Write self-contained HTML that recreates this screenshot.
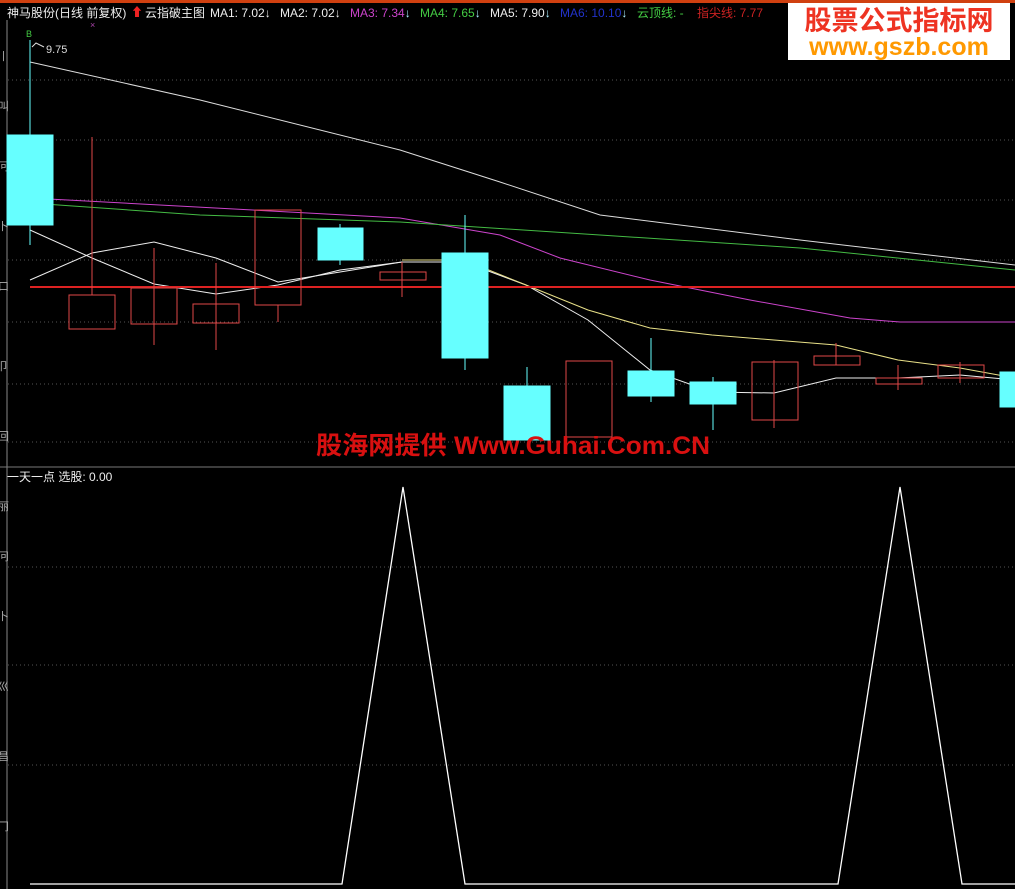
<!DOCTYPE html>
<html><head><meta charset="utf-8"><style>
html,body{margin:0;padding:0;background:#000;width:1015px;height:889px;overflow:hidden}
svg{display:block}
text{font-family:"Liberation Sans","Noto Sans CJK SC",sans-serif}
</style></head><body>
<svg width="1015" height="889" viewBox="0 0 1015 889" xmlns="http://www.w3.org/2000/svg">
<rect width="1015" height="889" fill="#000"/>
<rect x="0" y="0" width="1015" height="3" fill="#d04010"/>
<g stroke="#555" stroke-dasharray="1,3" stroke-width="1">
<line x1="8" y1="80" x2="1015" y2="80"/><line x1="8" y1="140" x2="1015" y2="140"/><line x1="8" y1="200" x2="1015" y2="200"/><line x1="8" y1="260" x2="1015" y2="260"/><line x1="8" y1="322" x2="1015" y2="322"/><line x1="8" y1="384" x2="1015" y2="384"/><line x1="8" y1="442" x2="1015" y2="442"/>
<line x1="8" y1="567" x2="1015" y2="567"/><line x1="8" y1="665" x2="1015" y2="665"/><line x1="8" y1="765" x2="1015" y2="765"/>
</g>
<line x1="7" y1="20" x2="7" y2="889" stroke="#888"/>
<line x1="0" y1="467" x2="1015" y2="467" stroke="#777"/>
<g fill="#aaa" font-size="11">
<text x="-2" y="60">丨</text><text x="-2" y="110">叫</text><text x="-2" y="170">冋</text><text x="-2" y="230">卜</text><text x="-2" y="290">口</text><text x="-2" y="370">卩</text><text x="-2" y="440">回</text>
<text x="-2" y="510">丽</text><text x="-2" y="560">冋</text><text x="-2" y="620">卜</text><text x="-2" y="690">巛</text><text x="-2" y="760">昌</text><text x="-2" y="830">冂</text>
</g>
<polyline fill="none" stroke="#ddd" points="30,62 200,100 400,150 500,182 600,215 800,240 1015,265"/>
<polyline fill="none" stroke="#cc44cc" points="30,198 400,218 500,235 560,258 650,280 750,300 850,318 900,322 1015,322"/>
<polyline fill="none" stroke="#44bb44" points="30,203 200,215 400,222 600,235 800,248 1015,270"/>
<polyline fill="none" stroke="#eee" points="30,230 92,258 154,284 216,294 278,285 340,270 402,262 464,262 526,285 588,320 650,370 712,392 774,393 836,378 898,378 960,375 1015,380"/>
<polyline fill="none" stroke="#eee" points="30,280 92,253 154,242 216,258 278,282 340,272 402,262"/>
<polyline fill="none" stroke="#e8e088" points="402,260 464,260 526,285 588,310 650,328 712,335 774,340 836,345 898,360 960,368 1015,378"/>
<line x1="30" y1="287" x2="1015" y2="287" stroke="#dd2222" stroke-width="2"/>
<g stroke="#e04848" fill="none">
<line x1="92" y1="137" x2="92" y2="295"/><rect x="69" y="295" width="46" height="34"/>
<line x1="154" y1="248" x2="154" y2="345"/><rect x="131" y="288" width="46" height="36"/>
<line x1="216" y1="263" x2="216" y2="350"/><rect x="193" y="304" width="46" height="19"/>
<line x1="278" y1="305" x2="278" y2="322"/><rect x="255" y="210" width="46" height="95"/>
<line x1="402" y1="262" x2="402" y2="297"/><rect x="380" y="272" width="46" height="8"/>
<rect x="566" y="361" width="46" height="76"/>
<line x1="774" y1="360" x2="774" y2="428"/><rect x="752" y="362" width="46" height="58"/>
<line x1="836" y1="343" x2="836" y2="365"/><rect x="814" y="356" width="46" height="9"/>
<line x1="898" y1="365" x2="898" y2="390"/><rect x="876" y="378" width="46" height="6"/>
<line x1="960" y1="362" x2="960" y2="383"/><rect x="938" y="365" width="46" height="13"/>
</g>
<g stroke="#66ffff" fill="#66ffff">
<line x1="30" y1="40" x2="30" y2="245"/><rect x="7" y="135" width="46" height="90"/>
<line x1="340" y1="224" x2="340" y2="265"/><rect x="318" y="228" width="45" height="32"/>
<line x1="465" y1="215" x2="465" y2="370"/><rect x="442" y="253" width="46" height="105"/>
<line x1="527" y1="367" x2="527" y2="440"/><rect x="504" y="386" width="46" height="54"/>
<line x1="651" y1="338" x2="651" y2="402"/><rect x="628" y="371" width="46" height="25"/>
<line x1="713" y1="377" x2="713" y2="430"/><rect x="690" y="382" width="46" height="22"/>
<rect x="1000" y="372" width="15" height="35"/>
</g>
<polyline fill="none" stroke="#ddd" points="32,47 36,43 44,47"/>
<text x="46" y="53" fill="#ddd" font-size="11">9.75</text>
<text x="26" y="37" fill="#44cc44" font-size="9">B</text>
<text x="90" y="28" fill="#a4a" font-size="9">×</text>
<g font-size="12">
<text x="7" y="17" fill="#eee">神马股份(日线 前复权)</text>
<text x="131" y="16" fill="#ee2222">⬆</text>
<text x="145" y="17" fill="#eee">云指破主图</text>
<text x="210" y="17" fill="#eee">MA1: 7.02↓</text>
<text x="280" y="17" fill="#eee">MA2: 7.02↓</text>
<text x="350" y="17" fill="#cc44cc">MA3: 7.34<tspan fill="#aef">↓</tspan></text>
<text x="420" y="17" fill="#44cc44">MA4: 7.65<tspan fill="#aef">↓</tspan></text>
<text x="490" y="17" fill="#eee">MA5: 7.90<tspan fill="#aef">↓</tspan></text>
<text x="560" y="17" fill="#2233cc">MA6: 10.10<tspan fill="#aef">↓</tspan></text>
<text x="637" y="17" fill="#44cc44">云顶线: -</text>
<text x="697" y="17" fill="#cc2222">指尖线: 7.77</text>
<text x="7" y="481" fill="#eee">一天一点 选股: 0.00</text>
</g>
<rect x="788" y="3" width="222" height="57" fill="#fff"/>
<text x="899" y="30" text-anchor="middle" fill="#ee3322" font-size="27" font-weight="bold">股票公式指标网</text>
<text x="899" y="55" text-anchor="middle" fill="#ff9900" font-size="25" font-weight="bold">www.gszb.com</text>
<text x="316" y="454" fill="#d81010" font-size="25" font-weight="bold" textLength="394" lengthAdjust="spacingAndGlyphs">股海网提供 Www.Guhai.Com.CN</text>
<polyline fill="none" stroke="#fff" stroke-width="1.3" points="30,884 342,884 403,487 465,884 838,884 900,487 962,884 1015,884"/>
</svg>
</body></html>
